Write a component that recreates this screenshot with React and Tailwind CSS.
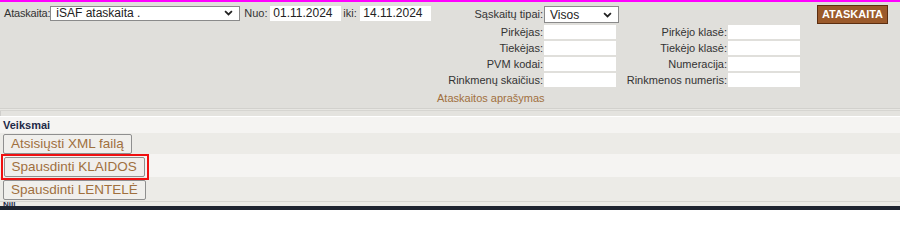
import React from "react";

const field = "h-[14px] w-[72px] bg-white border-0 outline-none px-[3px] text-[11px]";

const FormRow = ({ label, value, right, rightValue }) => (
  <>
    <label className="text-right pr-[1px] leading-[14px] whitespace-nowrap">{label}</label>
    <div className="h-[16px]">
      <input className={field} defaultValue={value} />
    </div>
    <label className="text-right pr-[1px] leading-[14px] whitespace-nowrap">{right}</label>
    <div className="h-[16px]">
      <input className={field} defaultValue={rightValue} />
    </div>
  </>
);

const Chevron = () => (
  <svg width="9" height="6" viewBox="0 0 10 7" className="shrink-0">
    <path d="M1 1.2 L5 5.2 L9 1.2" fill="none" stroke="#222" strokeWidth="2" />
  </svg>
);

const ActionButton = ({ children }) => (
  <button className="h-[20px] px-[7px] bg-[#f0efec] border border-[#8f8f8f] rounded-[2px] text-[13.5px] leading-[18px] text-[#a0703e] whitespace-nowrap">
    {children}
  </button>
);

export default function App() {
  return (
    <div
      className="w-[900px] h-[210px] overflow-hidden bg-[#e0dfdb] text-[11px] text-[#333]"
      style={{ fontFamily: '"Liberation Sans", Arial, sans-serif' }}
    >
      <div className="h-[2px] bg-[#ff00ff]" />

      {/* filter panel */}
      <div className="h-[106px] flex items-start">
        <div className="flex items-center pt-[3px] pl-[4px] w-[433px] whitespace-nowrap">
          <span className="tracking-[-0.2px]">Ataskaita:</span>
          <div className="w-[190px] h-[15px] bg-white border border-[#8a8a8a] flex items-center justify-between pl-[5px] pr-[6px] text-[12px] text-[#222]">
            <span className="leading-none">iSAF ataskaita .</span>
            <Chevron />
          </div>
          <span className="ml-[4px] w-[26px]">Nuo:</span>
          <input className="w-[71px] h-[15px] bg-white px-[3px] text-[12px] text-[#222] outline-none" defaultValue="01.11.2024" />
          <span className="ml-[2px] w-[17px]">iki:</span>
          <input className="w-[71px] h-[15px] bg-white px-[3px] text-[12px] text-[#222] outline-none" defaultValue="14.11.2024" />
        </div>

        <div className="ml-[4px] pt-[3px] grid grid-cols-[107px_76px_108px_72px] items-center">
          <label className="text-right pr-[1px] whitespace-nowrap">Sąskaitų tipai:</label>
          <div className="h-[19px] flex items-center">
            <div className="w-[75px] h-[17px] bg-white border border-[#8a8a8a] flex items-center justify-between pl-[5px] pr-[6px] text-[12px] text-[#222]">
              <span className="leading-none">Visos</span>
              <Chevron />
            </div>
          </div>
          <div />
          <div />
          <FormRow label="Pirkėjas:" right="Pirkėjo klasė:" />
          <FormRow label="Tiekėjas:" right="Tiekėjo klasė:" />
          <FormRow label="PVM kodai:" right="Numeracija:" />
          <FormRow label="Rinkmenų skaičius:" right="Rinkmenos numeris:" />
          <div className="col-span-4 pt-[2px] text-[#a0703e] whitespace-nowrap">Ataskaitos aprašymas</div>
        </div>

        <button className="ml-[17px] mt-[3px] h-[19px] w-[71px] bg-[#9b5a2b] border border-[#5c2e10] text-white font-bold text-[11px] leading-[17px]">
          ATASKAITA
        </button>
      </div>

      {/* separator */}
      <div className="h-[1px] bg-[#d2d1cd]" />
      <div className="h-[1px] bg-[#e8e7e3]" />
      <div className="h-[1px] bg-[#d6d5d1]" />
      <div className="h-[5px] bg-[#e4e3df] border-l border-[#cfcecb]" />
      <div className="h-[1px] bg-white" />

      {/* actions */}
      <div className="bg-[#f5f4f2] h-[16px] pl-[3px] font-bold text-[#1e2a48] leading-[16px]">Veiksmai</div>
      <div className="bg-[#ecebe7] h-[21px] pl-[3px] flex items-center">
        <ActionButton>Atsisiųsti XML failą</ActionButton>
      </div>
      <div className="bg-[#f5f4f2] h-[23px] pl-[1px] flex items-center">
        <div className="border-[2.5px] border-[#f01010] h-[26px] w-[148px] flex items-center pl-[0.5px] mt-[3px]">
          <ActionButton>Spausdinti KLAIDOS</ActionButton>
        </div>
      </div>
      <div className="bg-[#ecebe7] h-[24px] pl-[3px] flex items-start pt-[3px]">
        <ActionButton>Spausdinti LENTELĖ</ActionButton>
      </div>
      <div className="h-[1px] bg-[#d6d5d1]" />
      <div className="h-[4px] bg-[#ecebe7] overflow-hidden pl-[3px] text-[#1e2a48] font-bold text-[8px] leading-[6px]">Nill</div>
      <div className="h-[4px] bg-[#1e2430]" />
    </div>
  );
}
